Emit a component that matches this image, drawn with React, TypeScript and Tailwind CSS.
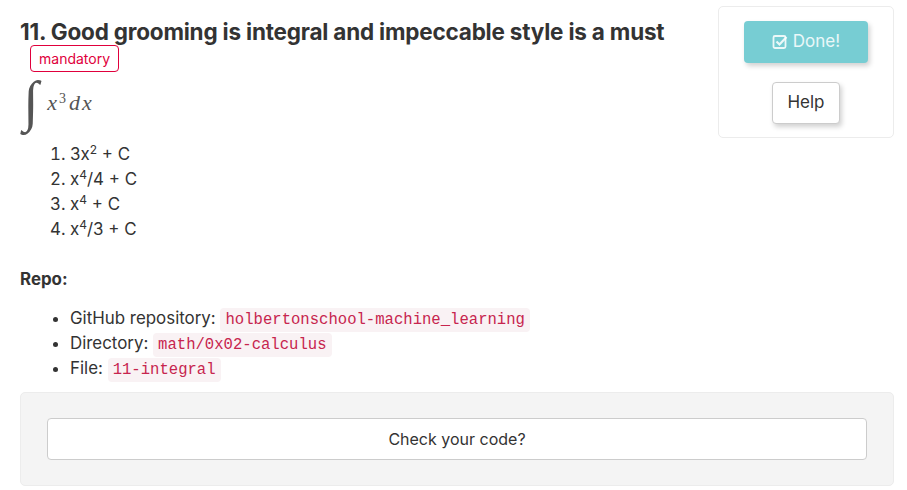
import React from "react";

const code =
  "rounded bg-[#f9f2f4] px-[5px] py-[3px] leading-none text-[#c7254e] text-[15.6px] [font-family:'Liberation_Mono',monospace]";

export default function App() {
  return (
    <div className="min-h-screen bg-white text-[#333] text-[16.9px] [font-family:Inter,'Noto_Sans',sans-serif]">
      <div className="pl-5 pr-[13px] pt-[6px]">
        <div className="flex gap-4">
          <div className="flex-1">
            <h3 className="pt-[13px] text-[22.5px] font-bold leading-[26px] tracking-[-0.2px]">
              11. Good grooming is integral and impeccable style is a must
            </h3>
            <span className="ml-[10px] inline-block rounded-[4px] border border-[#e0003c] px-[8px] py-[2px] text-[14px] leading-[21px] text-[#e0003c]">
              mandatory
            </span>
            <div className="mt-[1px] flex items-center text-[#555] [font-family:'Liberation_Serif',serif]">
              <span className="ml-[3px] text-[56px] leading-[56px] italic">∫</span>
              <span className="ml-[9px] mt-[2px] text-[22px] italic tracking-[2px]">
                x<sup className="text-[14px] not-italic">3</sup>
                <span className="ml-[1px]">dx</span>
              </span>
            </div>
            <ol className="mt-[13px] list-decimal pl-[50px] leading-[25px]">
              <li>3x<sup className="text-[12px]">2</sup> + C</li>
              <li>x<sup className="text-[12px]">4</sup>/4 + C</li>
              <li>x<sup className="text-[12px]">4</sup> + C</li>
              <li>x<sup className="text-[12px]">4</sup>/3 + C</li>
            </ol>
          </div>
          <div className="w-[176px] shrink-0">
            <div className="flex flex-col items-center gap-[19px] rounded-[5px] border border-[#ececec] pt-[14px] pb-[13px]">
              <button className="flex h-[42px] w-[124px] items-center justify-center gap-[5px] rounded-[4px] bg-[#77cdd3] text-[17px] text-white/85 shadow-[2px_3px_5px_rgba(0,0,0,0.18)]">
                <svg width="16" height="16" viewBox="0 0 16 16" fill="none" stroke="currentColor" strokeWidth="1.8">
                  <rect x="1.5" y="2" width="12" height="12" rx="1.5" />
                  <path d="M4.5 7.5l3 3 7-7.5" strokeWidth="2.2" />
                </svg>
                Done!
              </button>
              <button className="h-[42px] w-[68px] rounded-[4px] border border-[#ccc] bg-white text-[17px] text-[#333] shadow-[2px_3px_5px_rgba(0,0,0,0.18)]">
                Help
              </button>
            </div>
          </div>
        </div>

        <p className="mt-[25px] font-bold leading-[25px]">Repo:</p>
        <ul className="mt-[14px] list-disc pl-[50px] leading-[25px]">
          <li>
            GitHub repository: <code className={code}>holbertonschool-machine_learning</code>
          </li>
          <li>
            Directory: <code className={code}>math/0x02-calculus</code>
          </li>
          <li>
            File: <code className={code}>11-integral</code>
          </li>
        </ul>

        <div className="mt-[11px] rounded-[5px] border border-[#ececec] bg-[#f4f4f4] px-[26px] py-[25px]">
          <button className="h-[42px] w-full rounded-[4px] border border-[#ccc] bg-white text-[16px] text-[#333]">
            Check your code?
          </button>
        </div>
      </div>
    </div>
  );
}
